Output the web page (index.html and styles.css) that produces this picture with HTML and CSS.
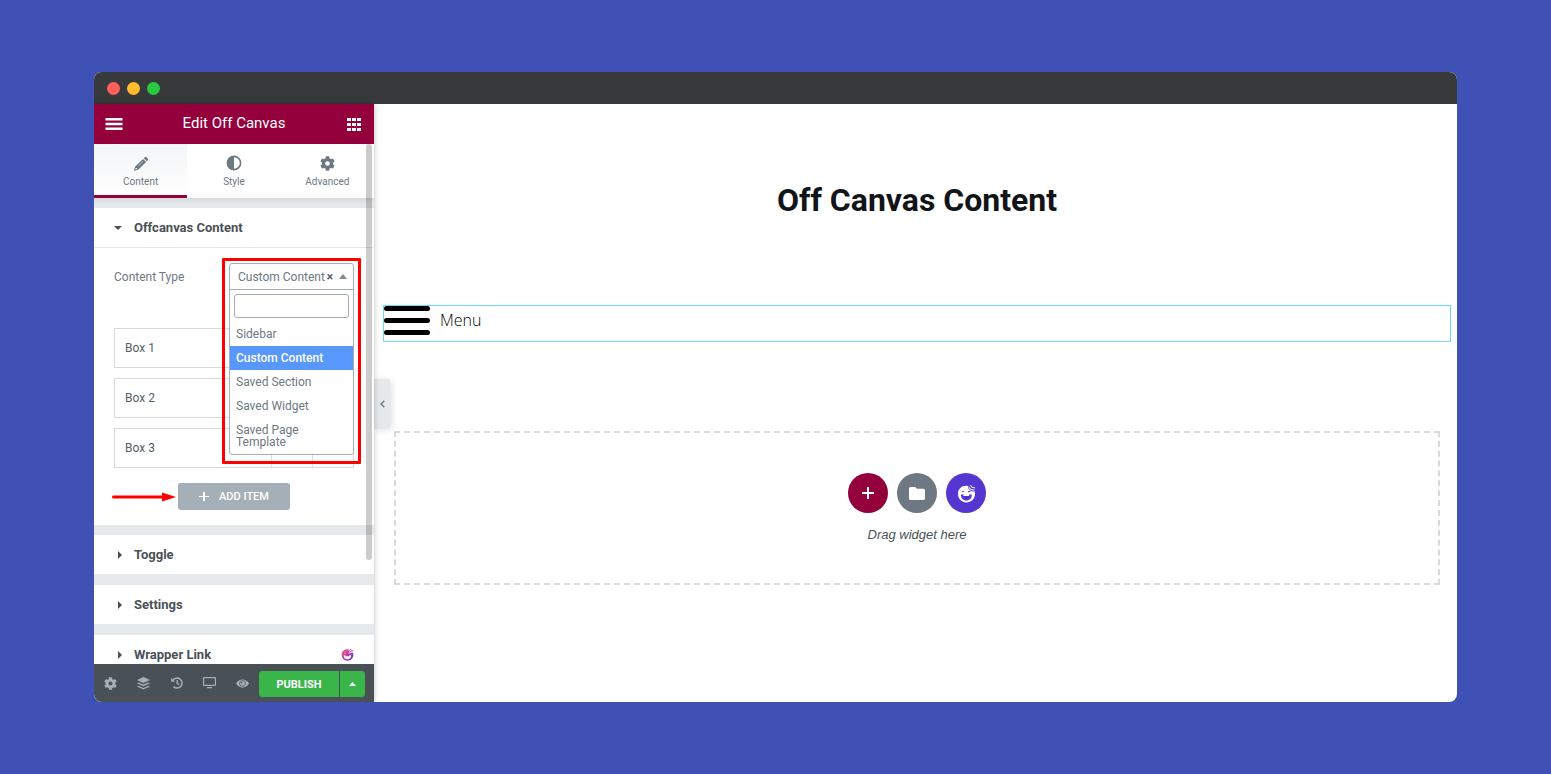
FILE: index.html
```html
<!DOCTYPE html>
<html lang="en">
<head>
    <meta charset="UTF-8">
    <meta name="viewport" content="width=device-width, initial-scale=1.0">
    <title>Edit Off Canvas</title>
    <link rel="stylesheet" href="styles.css">
</head>

<body>
    <!-- shared icons -->
    <svg class="defs" width="0" height="0" aria-hidden="true">
        <defs>
            <linearGradient id="pink-violet" x1="0" y1="0" x2="1" y2="1">
                <stop offset="0.2" stop-color="#ee4a86" />
                <stop offset="0.9" stop-color="#6a2fd8" />
            </linearGradient>
            <symbol id="gear" viewBox="0 0 512 512">
                <path d="M487 316l-42-25c4-23 4-47 0-70l42-25c5-3 7-9 6-14-11-36-30-68-55-95-4-4-10-5-15-2l-42 24c-18-15-39-27-61-35V25c0-6-4-11-9-12-36-8-73-8-110 0-5 1-9 6-9 12v49c-22 8-43 20-61 35L89 85c-5-3-11-2-15 2-25 27-44 59-55 95-2 5 0 11 5 14l43 25c-5 23-5 47 0 70l-43 25c-5 3-7 9-5 14 11 36 30 68 55 95 4 4 10 5 15 2l42-24c18 15 39 27 61 35v49c0 6 4 11 9 12 37 8 74 8 110 0 5-1 9-6 9-12v-49c22-8 43-20 61-35l42 24c5 3 11 2 15-2 25-27 44-59 55-95 1-5-1-11-6-14zM256 336a80 80 0 1 1 0-160 80 80 0 0 1 0 160z" />
            </symbol>
            <symbol id="smile" viewBox="0 0 20 20">
                <path fill-rule="evenodd" d="M11.500 2C6 .8 1 4.600 1 10.300 1 15.500 5 19.500 10 19.500s9-4 9-9.200c0-1-.1-1.800-.4-2.600-2.600.5-5-.4-6.200-2.500-.6-1-.9-2.100-.9-3.200zM4.200 11h2.600v1.700h6V11h2.800c.2 3.800-2.200 6.300-5.700 6.300S4 14.800 4.200 11zM4.800 8.800c.2-2 2.800-2 3.200-.2-1-.6-2.200-.5-3.200.2zM11.400 9c.2-2 2.800-2 3.200-.2-1-.6-2.200-.5-3.200.2z" />
                <path d="M12.600 2c.7 2.700 3 4.200 6 3.600l-.2 1.100c-3.200.5-5.700-1.200-6.400-4.200zM14.800 1c.6 1.800 2 2.700 4 2.400l.2 1c-2.600.4-4.500-.8-5.200-3z" />
            </symbol>
        </defs>
    </svg>

    <div class="window">
        <div class="title-bar">
            <span class="dot red"></span>
            <span class="dot yellow"></span>
            <span class="dot green"></span>
        </div>

        <div class="editor">
            <aside class="panel">
                <header class="panel-header">
                    <button type="button" class="icon-btn" aria-label="Menu">
                        <svg width="18" height="12" viewBox="0 0 18 12" fill="currentColor"><path d="M.5 0h17v2.500H.5zM.5 4.700h17v2.500H.5zM.5 9.400h17v2.500H.5z" /></svg>
                    </button>
                    <h1 class="panel-title">Edit Off Canvas</h1>
                    <button type="button" class="icon-btn" aria-label="Widgets">
                        <svg width="14" height="13" viewBox="0 0 14 13" fill="currentColor"><path d="M0 0h4v3H0zM5 0h4v3H5zM10 0h4v3h-4zM0 5h4v3H0zM5 5h4v3H5zM10 5h4v3h-4zM0 10h4v3H0zM5 10h4v3H5zM10 10h4v3h-4z" /></svg>
                    </button>
                </header>

                <div class="panel-body">
                    <nav class="tabs">
                        <button type="button" class="tab active">
                            <svg width="14" height="14" viewBox="0 0 14 14" fill="currentColor"><path d="M9.800 1.200l1-.9c.5-.4 1.100-.4 1.600 0l1.300 1.300c.4.5.4 1.100 0 1.600l-.9 1zM9.100 1.900l3 3-7.600 7.600-4.200 1.200c-.2 0-.3-.1-.3-.3l1.200-4zM1.800 10.800l-.4 1.600 1.600-.4v-.9h-.9zM8.800 4.200L4.100 8.900l.3.3 4.700-4.700z" fill-rule="evenodd" /></svg>
                            Content
                        </button>
                        <button type="button" class="tab">
                            <svg width="16" height="16" viewBox="0 0 16 16"><circle cx="8" cy="8" r="6.600" fill="none" stroke="currentColor" stroke-width="1.600" /><path d="M8 1a7 7 0 0 0 0 14z" fill="currentColor" /></svg>
                            Style
                        </button>
                        <button type="button" class="tab">
                            <svg width="15" height="15" fill="currentColor"><use href="#gear" /></svg>
                            Advanced
                        </button>
                    </nav>

                    <section class="section">
                        <button type="button" class="section-title open">
                            <svg class="caret" width="8" height="4" viewBox="0 0 8 4" fill="currentColor"><path d="M0 0h8L4 4z" /></svg>
                            Offcanvas Content
                        </button>
                        <div class="controls">
                            <div class="control">
                                <label for="content-type">Content Type</label>
                                <div class="dropdown">
                                    <select id="content-type" class="select">
                                        <option>Sidebar</option>
                                        <option selected>Custom Content</option>
                                        <option>Saved Section</option>
                                        <option>Saved Widget</option>
                                        <option>Saved Page Template</option>
                                    </select>
                                    <div class="select-marks">
                                        <span class="clear">×</span>
                                        <svg width="8" height="5" viewBox="0 0 8 5" fill="#888"><path d="M4 0l4 5H0z" /></svg>
                                    </div>
                                    <div class="dropdown-menu">
                                        <input type="text" class="dropdown-search" aria-label="Search">
                                        <ul class="options">
                                            <li>Sidebar</li>
                                            <li class="selected">Custom Content</li>
                                            <li>Saved Section</li>
                                            <li>Saved Widget</li>
                                            <li>Saved Page Template</li>
                                        </ul>
                                    </div>
                                    <div class="highlight"></div>
                                </div>
                            </div>

                            <div class="items">
                                <div class="item"><span class="item-name">Box 1</span><span class="item-tool"></span><span class="item-tool"></span></div>
                                <div class="item"><span class="item-name">Box 2</span><span class="item-tool"></span><span class="item-tool"></span></div>
                                <div class="item"><span class="item-name">Box 3</span><span class="item-tool"></span><span class="item-tool"></span></div>
                            </div>

                            <div class="add-row">
                                <svg class="arrow" width="64" height="10" viewBox="0 0 64 10" fill="#f00"><path d="M1.500 3.500H50V.500L64 5 50 9.500v-3H1.500a1.500 1.500 0 0 1 0-3z" /></svg>
                                <button type="button" class="add-btn">
                                    <svg width="10" height="9" viewBox="0 0 10 9" fill="currentColor"><path d="M4 0h2v4h4v1H6v4H4V5H0V4h4z" /></svg>
                                    ADD ITEM
                                </button>
                            </div>
                        </div>
                    </section>

                    <section class="section">
                        <button type="button" class="section-title">
                            <svg class="caret" width="4" height="8" viewBox="0 0 4 8" fill="currentColor"><path d="M0 0l4 4-4 4z" /></svg>
                            Toggle
                        </button>
                    </section>
                    <section class="section">
                        <button type="button" class="section-title">
                            <svg class="caret" width="4" height="8" viewBox="0 0 4 8" fill="currentColor"><path d="M0 0l4 4-4 4z" /></svg>
                            Settings
                        </button>
                    </section>
                    <section class="section">
                        <button type="button" class="section-title">
                            <svg class="caret" width="4" height="8" viewBox="0 0 4 8" fill="currentColor"><path d="M0 0l4 4-4 4z" /></svg>
                            Wrapper Link
                            <svg class="brand" width="13" height="13" fill="url(#pink-violet)"><use href="#smile" /></svg>
                        </button>
                    </section>
                    <div class="scroll-thumb"></div>
                </div>

                <footer class="panel-footer">
                    <button type="button" class="tool" aria-label="Settings">
                        <svg width="13" height="13" fill="currentColor"><use href="#gear" /></svg>
                    </button>
                    <button type="button" class="tool" aria-label="Navigator">
                        <svg width="13" height="13" viewBox="0 0 13 13" fill="currentColor"><path d="M6.500 0L13 3 6.500 6 0 3zM1.700 5.400l4.800 2.200 4.800-2.200L13 6.200l-6.500 3-6.500-3zM1.700 8.700l4.800 2.200 4.800-2.200 1.700.8-6.500 3-6.500-3z" /></svg>
                    </button>
                    <button type="button" class="tool" aria-label="History">
                        <svg width="12" height="12" viewBox="0 0 12 12" fill="none" stroke="currentColor" stroke-width="1.500"><path d="M1.600 3.700A5 5 0 1 1 2.500 9.600M6.200 3v3.400l2 1.300" /><path d="M.2.8v4h4z" fill="currentColor" stroke="none" /></svg>
                    </button>
                    <button type="button" class="tool" aria-label="Responsive Mode">
                        <svg width="13" height="12" viewBox="0 0 13 12" fill="currentColor"><path fill-rule="evenodd" d="M1 0h11a1 1 0 0 1 1 1v7a1 1 0 0 1-1 1H1a1 1 0 0 1-1-1V1a1 1 0 0 1 1-1zM1.200 1.200v6.600h10.600V1.200z" /><path d="M4 10h5v1.300H4z" /></svg>
                    </button>
                    <button type="button" class="tool" aria-label="Preview">
                        <svg width="13" height="9" viewBox="0 0 13 9"><path d="M0 4.500C3-1 10-1 13 4.500 10 10 3 10 0 4.500z" fill="currentColor" /><circle cx="6.500" cy="4.500" r="2.900" fill="none" stroke="#495157" stroke-width=".8" /><circle cx="5.600" cy="3.700" r=".7" fill="#495157" /></svg>
                    </button>
                    <button type="button" class="publish">PUBLISH</button>
                    <button type="button" class="publish-more" aria-label="Save options">
                        <svg width="7" height="4" viewBox="0 0 7 4" fill="currentColor"><path d="M3.500 0L7 4H0z" /></svg>
                    </button>
                </footer>
            </aside>

            <main class="canvas">
                <button type="button" class="collapse" aria-label="Hide panel">
                    <svg width="5" height="8" viewBox="0 0 5 8" fill="none" stroke="currentColor" stroke-width="1.400"><path d="M4.300.7L1 4l3.300 3.300" /></svg>
                </button>
                <h2 class="heading">Off Canvas Content</h2>
                <div class="widget">
                    <svg width="46" height="30" viewBox="0 0 46 30"><path d="M2.500 2.500h41M2.500 14.500h41M2.500 26.500h41" stroke="#000" stroke-width="5" stroke-linecap="round" /></svg>
                    <a href="#" class="menu-link">Menu</a>
                </div>
                <div class="drop-area">
                    <div class="drop-buttons">
                        <button type="button" class="round add" aria-label="Add section">
                            <svg width="12" height="12" viewBox="0 0 12 12" fill="currentColor"><path d="M5 0h2v5h5v2H7v5H5V7H0V5h5z" /></svg>
                        </button>
                        <button type="button" class="round folder" aria-label="Add template">
                            <svg width="16" height="13" viewBox="0 0 16 13" fill="currentColor"><path d="M1.500 0h4.800L8 1.800h6.500A1.500 1.500 0 0 1 16 3.300v8.200a1.500 1.500 0 0 1-1.500 1.500h-13A1.500 1.500 0 0 1 0 11.500v-10A1.500 1.500 0 0 1 1.500 0z" /></svg>
                        </button>
                        <button type="button" class="round happy" aria-label="Add block">
                            <svg width="19" height="19" fill="currentColor"><use href="#smile" /></svg>
                        </button>
                    </div>
                    <p class="drop-text">Drag widget here</p>
                </div>
            </main>
        </div>
    </div>
</body>
</html>
```

FILE: styles.css
```css
* { box-sizing: border-box; }
body {
    margin: 0;
    min-height: 100vh;
    padding: 72px 94px;
    display: flex;
    background-color: #3f51b5;
    font-family: Roboto, Arial, sans-serif;
    font-size: 12px;
    color: #6d7882;
}
button {
    padding: 0;
    border: none;
    background: none;
    color: inherit;
    font-family: inherit;
    cursor: pointer;
}
svg { display: block; flex-shrink: 0; }
.defs { position: absolute; }

/* window */
.window {
    flex: 1;
    display: flex;
    flex-direction: column;
    border-radius: 8px;
    overflow: hidden;
    background-color: #fff;
}
.title-bar {
    height: 32px;
    display: flex;
    align-items: center;
    gap: 7px;
    padding: 1px 13px 0;
    background-color: #37393a;
}
.dot { width: 13px; height: 13px; border-radius: 50%; }
.red { background-color: #ff5f57; }
.yellow { background-color: #ffbd2e; }
.green { background-color: #28ca42; }
.editor { flex: 1; display: flex; min-height: 0; }

/* panel */
.panel {
    width: 280px;
    flex-shrink: 0;
    display: flex;
    flex-direction: column;
    background-color: #e6e9ec;
    box-shadow: 0 0 6px rgba(0, 0, 0, 0.25);
    z-index: 1;
}
.panel-header {
    height: 40px;
    display: flex;
    align-items: center;
    justify-content: space-between;
    padding: 0 13px 0 11px;
    background-color: #93003c;
    color: #fff;
}
.panel-title { margin: 0; padding: 0 2px 2px 0; font-size: 15px; font-weight: 400; line-height: 36px; }
.panel-body { flex: 1 1 0; min-height: 0; overflow: hidden; position: relative; }
.tabs {
    display: flex;
    height: 54px;
    margin-bottom: 10px;
    background-color: #fff;
    box-shadow: 0 2px 6px rgba(0, 0, 0, 0.08);
}
.tab {
    flex: 1;
    display: flex;
    flex-direction: column;
    align-items: center;
    justify-content: flex-end;
    gap: 5px;
    padding-bottom: 7px;
    border-bottom: 3px solid transparent;
    font-size: 10px;
    line-height: 12px;
}
.tab.active {
    border-bottom-color: #93003c;
    background: linear-gradient(#f3f4f6, #fff);
}
.section { margin-bottom: 10px; background-color: #fff; }
.section-title {
    width: 100%;
    height: 40px;
    display: flex;
    align-items: center;
    padding: 0 20px;
    border-bottom: 1px solid #e6e9ec;
    color: #495157;
    font-size: 13px;
    font-weight: 700;
}
.caret { margin-left: 4px; margin-right: 12px; }
.open .caret { margin-left: 0; }
.brand { margin-left: auto; }
.controls { padding: 15px 20px; }
.control {
    display: flex;
    align-items: center;
    justify-content: space-between;
    margin-bottom: 38px;
}
.dropdown { position: relative; width: 125px; }
.select {
    display: block;
    appearance: none;
    width: 100%;
    height: 27px;
    padding: 0 8px;
    border: 1px solid #a4afb7;
    border-radius: 3px 3px 0 0;
    background-color: #fff;
    color: #6d7882;
    font: 12px Roboto, Arial, sans-serif;
}
.select-marks {
    position: absolute;
    top: 0;
    right: 7px;
    height: 27px;
    display: flex;
    align-items: center;
    gap: 6px;
    pointer-events: none;
}
.clear { font-weight: 700; color: #556068; }
.dropdown-menu {
    position: absolute;
    top: 26px;
    left: 0;
    right: 0;
    z-index: 2;
    border: 1px solid #a4afb7;
    border-radius: 0 0 3px 3px;
    background-color: #fff;
}
.dropdown-search {
    display: block;
    width: 115px;
    height: 24px;
    margin: 4px;
    border: 1px solid #aaa;
    border-radius: 3px;
}
.options { margin: 0; padding: 0; list-style: none; }
.options li { padding: 6px; line-height: 12px; }
.options .selected { background-color: #5897fb; color: #fff; font-weight: 500; }
.highlight {
    position: absolute;
    top: -5px;
    left: -7px;
    right: -7px;
    height: 206px;
    border: 3px solid #f00;
    border-radius: 1px;
    z-index: 3;
    pointer-events: none;
}
.items { display: flex; flex-direction: column; gap: 10px; }
.item {
    height: 40px;
    display: flex;
    border: 1px solid #d5dadf;
    color: #556068;
    line-height: 38px;
}
.item-name { flex: 1; padding-left: 10px; }
.item-tool { width: 41px; border-left: 1px solid #d5dadf; }
.add-row {
    position: relative;
    display: flex;
    justify-content: center;
    margin-top: 15px;
}
.add-btn {
    height: 27px;
    display: flex;
    align-items: center;
    gap: 10px;
    padding: 0 21px;
    border-radius: 3px;
    background-color: #a4afb7;
    color: #fff;
    font-size: 11px;
    font-weight: 500;
}
.arrow { position: absolute; left: -2px; top: 9px; }
.scroll-thumb {
    position: absolute;
    top: 0;
    right: 2px;
    width: 6px;
    height: 416px;
    border-radius: 3px;
    background-color: rgba(0, 0, 0, 0.2);
}
.panel-footer {
    height: 38px;
    display: flex;
    align-items: center;
    padding-right: 9px;
    background-color: #495157;
    color: #a4afb7;
}
.tool { width: 33px; height: 38px; display: flex; align-items: center; justify-content: center; }
.publish, .publish-more {
    height: 26px;
    margin-top: 2px;
    background-color: #39b54a;
    color: #fff;
    font-size: 11px;
    font-weight: 700;
}
.publish { flex: 1; border-radius: 3px 0 0 3px; }
.publish-more {
    width: 25px;
    margin-left: 1px;
    display: flex;
    align-items: center;
    justify-content: center;
    border-radius: 0 3px 3px 0;
}

/* canvas */
.canvas { flex: 1; min-width: 0; position: relative; padding: 77px 6px 0 9px; }
.collapse {
    position: absolute;
    left: 0;
    top: 275px;
    width: 16px;
    height: 50px;
    display: flex;
    align-items: center;
    justify-content: center;
    border-radius: 0 3px 3px 0;
    background-color: #e6e9ec;
    box-shadow: 2px 1px 6px rgba(0, 0, 0, 0.12);
}
.heading {
    margin: 0 0 86px;
    color: #111418;
    font-size: 32px;
    line-height: 38px;
    font-weight: 700;
    text-align: center;
}
.widget {
    height: 37px;
    display: flex;
    gap: 10px;
    border: 1px solid #71d7f7;
}
.menu-link {
    color: #000;
    font-family: "Open Sans", sans-serif;
    font-size: 16px;
    font-weight: 300;
    line-height: 28px;
    text-decoration: none;
}
.drop-area {
    height: 154px;
    margin: 89px 11px 0;
    padding-top: 40px;
    border: 2px dashed #d5dadf;
}
.drop-buttons { display: flex; justify-content: center; gap: 9px; }
.round {
    width: 40px;
    height: 40px;
    display: flex;
    align-items: center;
    justify-content: center;
    border-radius: 50%;
    color: #fff;
}
.add { background-color: #93003c; }
.folder { background-color: #6d7882; }
.happy { background-color: #5636d1; }
.drop-text {
    margin: 14px 0 0;
    color: #495157;
    font-family: "Liberation Sans", Arial, sans-serif;
    font-size: 13px;
    font-style: italic;
    line-height: 16px;
    text-align: center;
}
```
